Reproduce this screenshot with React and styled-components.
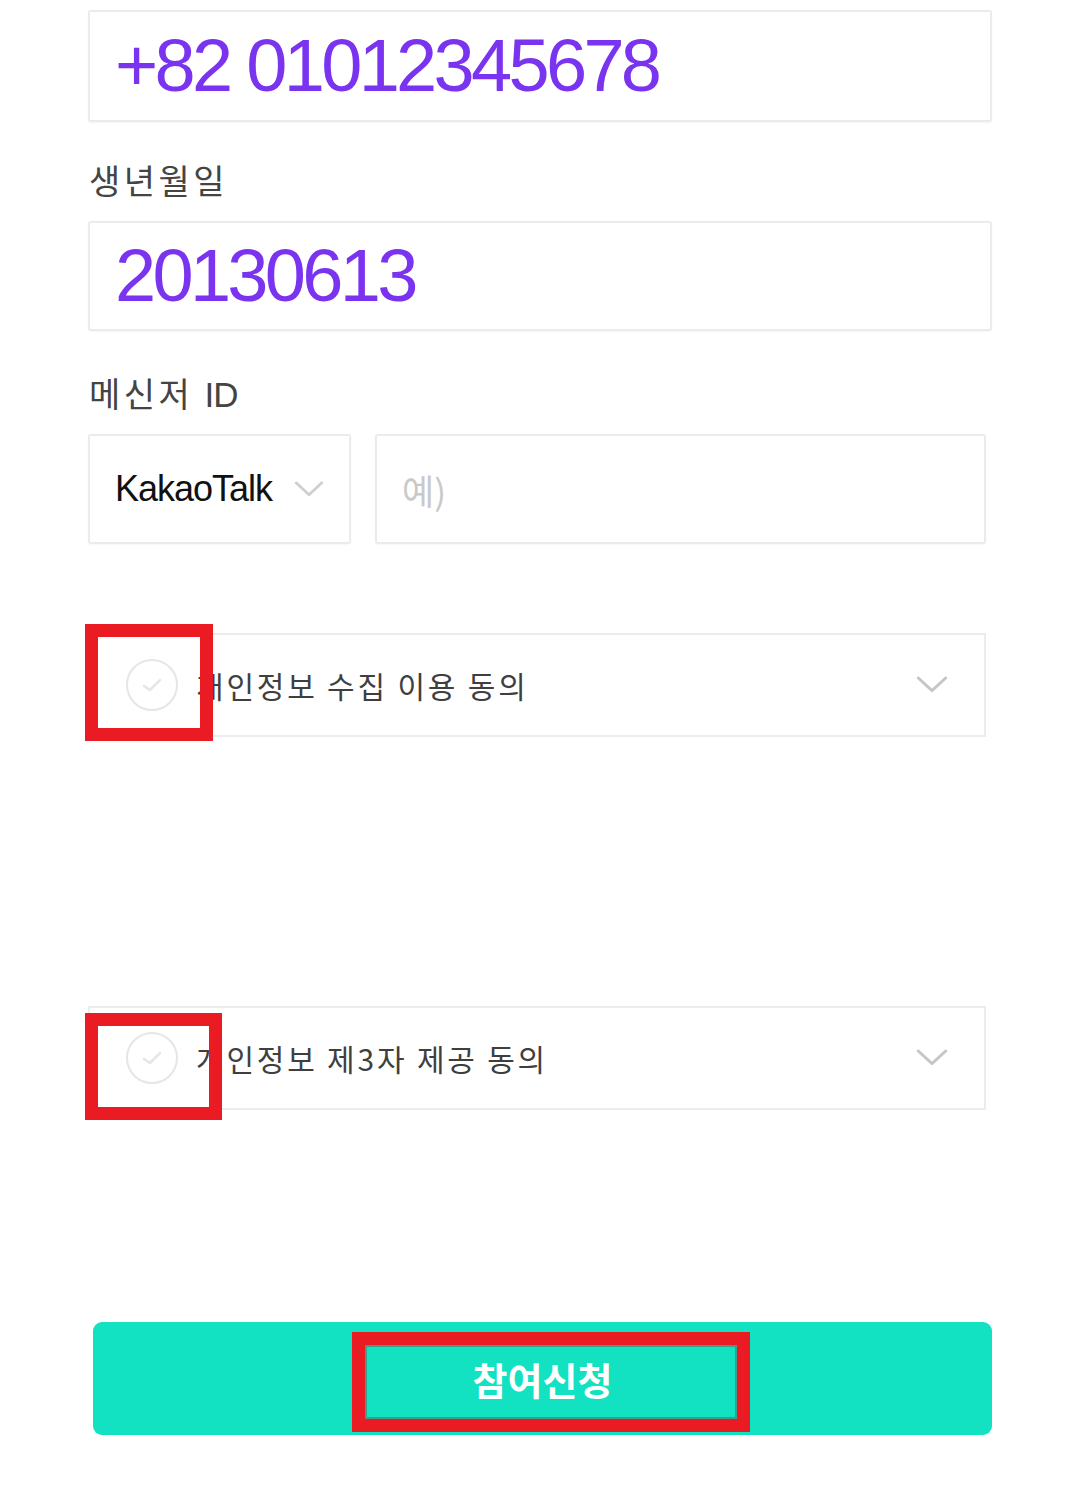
import React from 'react';
import styled, { createGlobalStyle } from 'styled-components';

const GlobalStyle = createGlobalStyle`
  body {
    margin: 0;
    background: #ffffff;
    font-family: "Liberation Sans", "Noto Sans CJK KR", sans-serif;
  }
`;

const Form = styled.div`
  display: flex;
  flex-direction: column;
  width: 904px;
  margin-left: 88px;
  padding-top: 10px;
  padding-bottom: 68px;
`;

const Box = styled.div`
  box-sizing: border-box;
  display: flex;
  align-items: center;
  height: ${(p) => p.h || 110}px;
  width: ${(p) => (p.w ? `${p.w}px` : '100%')};
  padding: 0 25px;
  border: 2px solid #ebebeb;
  border-radius: 3px;
  background: #fff;
  box-shadow: 0 1px 2px rgba(0, 0, 0, 0.04);
`;

const BigValue = styled.span`
  font-family: "Liberation Sans", sans-serif;
  font-size: 74px;
  letter-spacing: -3.7px;
  color: #7a34f0;
  line-height: 1;
`;

const Label = styled.div`
  margin: ${(p) => p.top}px 0 21px 1px;
  height: 40px;
  line-height: 40px;
  font-family: "Noto Sans CJK KR", sans-serif;
  font-size: 34px;
  color: #444;
  letter-spacing: 3.5px;
`;

const Latin = styled.span`
  font-family: "Liberation Sans", sans-serif;
  font-size: 35px;
  letter-spacing: -1px;
`;

const Row = styled.div`
  display: flex;
  gap: 24px;
  width: 898px;
`;

const SelectText = styled.span`
  flex: 1;
  font-family: "Liberation Sans", sans-serif;
  font-size: 36px;
  letter-spacing: -1px;
  color: #111;
`;

const Placeholder = styled.span`
  font-family: "Noto Sans CJK KR", sans-serif;
  font-size: 35px;
  color: #c9c9c9;
`;

const Agree = styled.div`
  position: relative;
  box-sizing: border-box;
  display: flex;
  align-items: center;
  width: 898px;
  height: 104px;
  margin-top: ${(p) => p.top}px;
  padding: 0 36px;
  border: 2px solid #ececec;
  background: #fff;
`;

const Circle = styled.span`
  box-sizing: border-box;
  display: flex;
  align-items: center;
  justify-content: center;
  width: 52px;
  height: 52px;
  border: 2px solid #e6e6e6;
  border-radius: 50%;
  flex-shrink: 0;
`;

const AgreeText = styled.span`
  flex: 1;
  margin-left: 18px;
  font-family: "Noto Sans CJK KR", sans-serif;
  font-size: 30px;
  letter-spacing: 2.8px;
  color: #3f3f3f;
`;

const Mark = styled.div`
  position: absolute;
  left: ${(p) => p.x}px;
  top: ${(p) => p.y}px;
  width: ${(p) => p.w}px;
  height: ${(p) => p.h}px;
  box-sizing: border-box;
  border: 13px solid #ea1b22;
  box-shadow: ${(p) => (p.inner ? 'inset 0 0 0 2px rgba(120, 60, 60, 0.4)' : 'none')};
  pointer-events: none;
`;

const Submit = styled.div`
  position: relative;
  display: flex;
  align-items: center;
  justify-content: center;
  width: 899px;
  height: 113px;
  margin: 212px 0 0 5px;
  border-radius: 9px;
  background: #12e2c2;
  color: #fff;
  font-family: "Noto Sans CJK KR", sans-serif;
  font-weight: 700;
  font-size: 38px;
`;

const Chevron = ({ color = '#c6c6c6', w = 32 }) => (
  <svg width={w} height={w * 0.55} viewBox="0 0 32 18" fill="none">
    <path d="M2 2 L16 15 L30 2" stroke={color} strokeWidth="3" strokeLinecap="round" strokeLinejoin="round" />
  </svg>
);

const Check = () => (
  <svg width="28" height="22" viewBox="0 0 28 22" fill="none">
    <path d="M6 12 L12 16 L22 6" stroke="#e6e6e6" strokeWidth="2.5" strokeLinecap="round" strokeLinejoin="round" />
  </svg>
);

const AgreeRow = ({ text, top, mark }) => (
  <Agree top={top}>
    <Circle>
      <Check />
    </Circle>
    <AgreeText>{text}</AgreeText>
    <Chevron />
    <Mark {...mark} />
  </Agree>
);

export default function App() {
  return (
    <>
      <GlobalStyle />
      <Form>
        <Box h={112}>
          <BigValue>+82 01012345678</BigValue>
        </Box>
        <Label top={38}>생년월일</Label>
        <Box>
          <BigValue>20130613</BigValue>
        </Box>
        <Label top={42}>
          메신저 <Latin>ID</Latin>
        </Label>
        <Row>
          <Box w={263}>
            <SelectText>KakaoTalk</SelectText>
            <Chevron w={30} color="#cfcfcf" />
          </Box>
          <Box w={611}>
            <Placeholder>예)</Placeholder>
          </Box>
        </Row>
        <AgreeRow
          text="개인정보 수집 이용 동의"
          top={89}
          mark={{ x: -5, y: -11, w: 128, h: 117 }}
        />
        <AgreeRow
          text="개인정보 제3자 제공 동의"
          top={269}
          mark={{ x: -5, y: 5, w: 137, h: 107 }}
        />
        <Submit>
          참여신청
          <Mark inner x={259} y={10} w={398} h={100} />
        </Submit>
      </Form>
    </>
  );
}
